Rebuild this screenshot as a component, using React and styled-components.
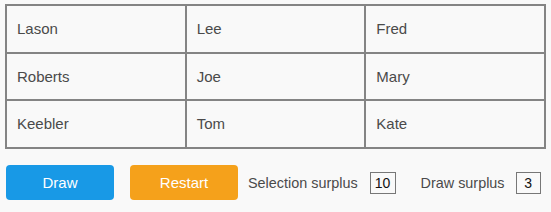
import React from "react";
import styled, { createGlobalStyle } from "styled-components";

const Global = createGlobalStyle`
  html, body { margin: 0; padding: 0; background: #f9f9f9; }
  body { font-family: "Liberation Sans", Arial, Helvetica, sans-serif; }
`;

const Page = styled.div`
  padding: 4px 6px 0 5px;
  display: flex;
  flex-direction: column;
  gap: 16px;
`;

const Table = styled.table`
  border-collapse: collapse;
  width: 541px;
  table-layout: fixed;
`;

const Cell = styled.td`
  border: 2px solid #848484;
  box-sizing: border-box;
  padding: 0 0 1px 10px;
  font-size: 15px;
  color: #4a4a4a;
  vertical-align: middle;
`;

const Row = styled.tr`
  height: 47.7px;
`;

const Controls = styled.div`
  display: flex;
  align-items: center;
  padding-left: 1px;
`;

const Button = styled.button`
  width: 108px;
  height: 35px;
  border: none;
  border-radius: 4px;
  background: ${(p) => p.$bg};
  color: #fff;
  font-family: inherit;
  font-size: 15px;
  margin-right: ${(p) => p.$mr}px;
  padding: 0;
`;

const Label = styled.span`
  font-size: 14.4px;
  color: #4a4a4a;
  margin-right: ${(p) => p.$mr}px;
`;

const NumBox = styled.div`
  width: ${(p) => p.$w}px;
  height: 22px;
  box-sizing: border-box;
  border: 1px solid #777;
  display: flex;
  align-items: center;
  justify-content: center;
  font-size: 14px;
  color: #111;
  margin-right: ${(p) => p.$mr}px;
`;

const rows = [
  ["Lason", "Lee", "Fred"],
  ["Roberts", "Joe", "Mary"],
  ["Keebler", "Tom", "Kate"],
];

export default function App() {
  return (
    <>
      <Global />
      <Page>
        <Table>
          <tbody>
            {rows.map((r, i) => (
              <Row key={i}>
                {r.map((n) => (
                  <Cell key={n}>{n}</Cell>
                ))}
              </Row>
            ))}
          </tbody>
        </Table>
        <Controls>
          <Button $bg="#1899e6" $mr={16}>Draw</Button>
          <Button $bg="#f5a11b" $mr={10}>Restart</Button>
          <Label $mr={12}>Selection surplus</Label>
          <NumBox $w={26} $mr={25}>10</NumBox>
          <Label $mr={11}>Draw surplus</Label>
          <NumBox $w={25} $mr={0}>3</NumBox>
        </Controls>
      </Page>
    </>
  );
}
